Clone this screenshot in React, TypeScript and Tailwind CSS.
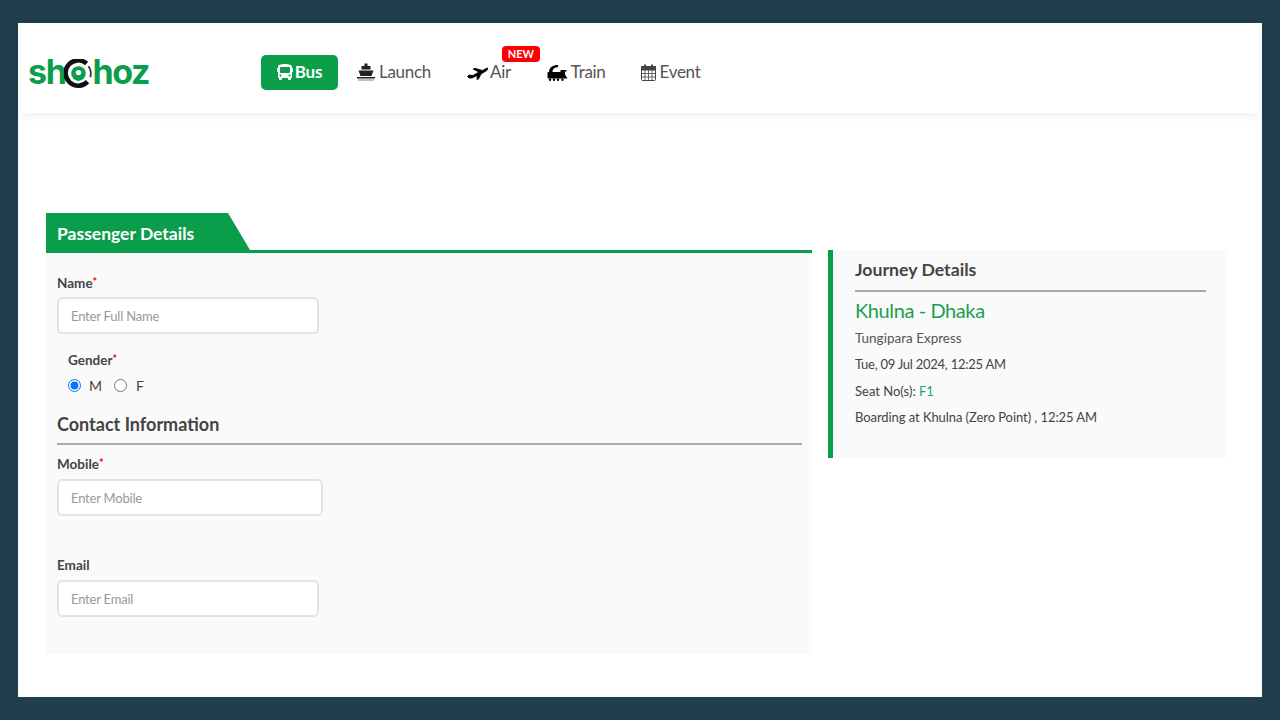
import React from 'react';
import { FaBus } from 'react-icons/fa';

const font = "font-['Lato','Noto_Sans',sans-serif]";

const ShipIcon = () => (
    <svg viewBox="0 0 18 18" className="w-[18px] h-[18px] text-[#222]" fill="currentColor">
        <rect x="7.5" y="0.5" width="3" height="2.5" />
        <rect x="4.5" y="3" width="9" height="3.5" rx="0.5" />
        <path d="M1.5 7.5h15l-2 5.5h-11z" />
        <rect x="0" y="14" width="18" height="1.5" />
        <rect x="1" y="16.5" width="16" height="1" opacity="0.55" />
    </svg>
);

const PlaneIcon = () => (
    <svg viewBox="0 0 21 15" className="w-[21px] h-[15px] text-black" fill="currentColor" stroke="currentColor" strokeWidth="0.8">
        <path d="M0.5 11.5L2 10l4 .5L12 7 6 4l2-.7 7.5 2.2L19 3.5c1.2-.7 1.8-.8 1.8 0 0 1.3-1 2.2-2.8 3L14 9l-2.5 5-1.5.5V10.5L5 13H2z" />
    </svg>
);

const TrainIcon = () => (
    <svg viewBox="0 0 21 17" className="w-[21px] h-[17px] text-black" fill="currentColor">
        <path d="M2 8C2 3.5 6 1 11 1v2.2C7.5 3.2 5.5 5 5.5 8z" />
        <rect x="0.5" y="8" width="14" height="6.5" rx="1" />
        <path d="M13.5 6h6v1.5h-1.5v3l2.5 4h-7z" />
        <circle cx="3" cy="15.7" r="1.2" />
        <circle cx="7" cy="15.7" r="1.2" />
        <circle cx="11" cy="15.7" r="1.2" />
        <circle cx="15.5" cy="15.7" r="1.2" />
    </svg>
);

const CalendarIcon = () => (
    <svg viewBox="0 0 15 17" className="w-[15px] h-[17px] text-[#444]" fill="none" stroke="currentColor" strokeWidth="1">
        <rect x="0.5" y="2.5" width="14" height="14" rx="1" />
        <rect x="0.5" y="2.5" width="14" height="3.5" fill="currentColor" />
        <rect x="3" y="0.5" width="2" height="3.5" fill="currentColor" stroke="none" />
        <rect x="10" y="0.5" width="2" height="3.5" fill="currentColor" stroke="none" />
        <path d="M0.5 9.5h14M0.5 13h14M4 6v10.5M7.5 6v10.5M11 6v10.5" strokeWidth="0.8" />
    </svg>
);

const Logo: React.FC = () => (
    <div className="flex items-center text-[34px] leading-none font-bold text-[#0b9e4a] font-['Inter',sans-serif] tracking-[-1.4px]">
        <span>sh</span>
        <svg viewBox="0 0 32 32" className="w-[29px] h-[29px] mx-[-1px] mt-[3px] shrink-0">
            <path d="M26 25 A14 14 0 1 1 25 5" fill="none" stroke="#111" strokeWidth="5" />
            <path d="M29 20 A14 14 0 0 0 27 8" fill="none" stroke="#333" strokeWidth="2" />
            <circle cx="16" cy="16" r="8" fill="#0b9e4a" />
            <circle cx="16" cy="15" r="3" fill="#fff" />
            <path d="M12 18l4 7 4-7z" fill="#0b9e4a" />
        </svg>
        <span>hoz</span>
    </div>
);

const NavItem: React.FC<{ icon: React.ReactNode; label: string; className?: string }> = ({ icon, label, className }) => (
    <a className={`flex items-center text-[#555] text-[17px] tracking-[-0.3px] ${className}`}>
        {icon}
        <span>{label}</span>
    </a>
);

const Label: React.FC<{ text: string; required?: boolean }> = ({ text, required }) => (
    <label className="block text-[13.5px] leading-[20px] font-bold text-[#444]">
        {text}
        {required && <span className="text-[#f00] text-[11px] align-[2px]">*</span>}
    </label>
);

const Field: React.FC<{ placeholder: string; className: string }> = ({ placeholder, className }) => (
    <input
        placeholder={placeholder}
        className={`block bg-white border-2 border-[#e4e4e4] rounded-[5px] px-[12px] text-[13px] tracking-[-0.2px] text-[#444] placeholder:text-[#999] outline-none ${className}`}
    />
);

export default function App() {
    return (
        <div className={`w-[1280px] h-[720px] overflow-hidden bg-[#203f4d] py-[23px] px-[18px] ${font}`}>
            <div className="h-[674px] bg-white">
                <header className="h-[90px] flex items-center pl-[10px] pt-[8px] shadow-[0_2px_10px_rgba(0,0,0,0.07)]">
                    <div className="w-[233px]">
                        <Logo />
                    </div>
                    <nav className="flex items-center">
                        <a className="flex items-center gap-[2px] w-[77px] h-[35px] justify-center bg-[#0b9e4a] rounded-[5px] text-white text-[17px] font-bold tracking-[-0.2px]">
                            <FaBus className="w-[16px] h-[16px]" />
                            <span>Bus</span>
                        </a>
                        <NavItem className="ml-[19px] gap-[4px]" icon={<ShipIcon />} label="Launch" />
                        <div className="relative ml-[36px]">
                            <NavItem className="gap-[2px]" icon={<PlaneIcon />} label="Air" />
                            <span className="absolute top-[-13px] left-[35px] w-[38px] h-[16px] flex items-center justify-center bg-[#f00] rounded-[4px] text-white text-[11px] font-bold">NEW</span>
                        </div>
                        <NavItem className="ml-[36px] gap-[3px]" icon={<TrainIcon />} label="Train" />
                        <NavItem className="ml-[35px] gap-[4px]" icon={<CalendarIcon />} label="Event" />
                    </nav>
                </header>

                <main className="flex items-start gap-[16px] pl-[28px] pt-[100px]">
                    <section className="w-[766px]">
                        <div className="h-[37px] w-[204px] bg-[#0b9e4a] text-white text-[17.5px] font-bold leading-[42px] pl-[11px] [clip-path:polygon(0_0,182px_0,204px_100%,0_100%)]">
                            Passenger Details
                        </div>
                        <div className="h-[404px] bg-[#fafafa] border-t-[3px] border-[#0b9e4a] px-[11px] pt-[19px]">
                            <Label text="Name" required />
                            <Field placeholder="Enter Full Name" className="w-[262px] h-[37px] mt-[4px]" />
                            <div className="ml-[11px] mt-[15px]">
                                <Label text="Gender" required />
                                <div className="flex items-center mt-[5px] text-[14px] text-[#444]">
                                    <input type="radio" name="gender" defaultChecked className="w-[13px] h-[13px]" />
                                    <span className="ml-[8px]">M</span>
                                    <input type="radio" name="gender" className="w-[13px] h-[13px] ml-[12px]" />
                                    <span className="ml-[9px]">F</span>
                                </div>
                            </div>
                            <h3 className="mt-[15px] text-[18px] leading-[26px] font-bold text-[#444]">Contact Information</h3>
                            <div className="w-[745px] h-[2px] bg-[#aaa] mt-[6px]" />
                            <div className="mt-[8px]">
                                <Label text="Mobile" required />
                            </div>
                            <Field placeholder="Enter Mobile" className="w-[266px] h-[37px] mt-[5px]" />
                            <div className="mt-[39px]">
                                <Label text="Email" />
                            </div>
                            <Field placeholder="Enter Email" className="w-[262px] h-[37px] mt-[5px]" />
                        </div>
                    </section>

                    <aside className="w-[399px] h-[208px] mt-[37px] bg-[#fafafa] border-l-[5px] border-[#0b9e4a] pl-[22px] pr-[21px] pt-[7px]">
                        <h3 className="text-[17.7px] leading-[26px] font-bold text-[#444]">Journey Details</h3>
                        <div className="h-[2px] bg-[#aaa] mt-[7px]" />
                        <div className="mt-[4px] text-[20px] leading-[28px] tracking-[-0.4px] text-[#1c9e52]">Khulna - Dhaka</div>
                        <div className="mt-[4px] text-[13.5px] leading-[20px] text-[#555]">Tungipara Express</div>
                        <div className="mt-[6px] text-[13px] leading-[20px] tracking-[-0.25px] text-[#444]">Tue, 09 Jul 2024, 12:25 AM</div>
                        <div className="mt-[7px] text-[13px] leading-[20px] text-[#444]">
                            Seat No(s): <span className="text-[#17a673]">F1</span>
                        </div>
                        <div className="mt-[6px] text-[13px] leading-[20px] tracking-[-0.07px] text-[#444]">Boarding at Khulna (Zero Point) , 12:25 AM</div>
                    </aside>
                </main>
            </div>
        </div>
    );
}
